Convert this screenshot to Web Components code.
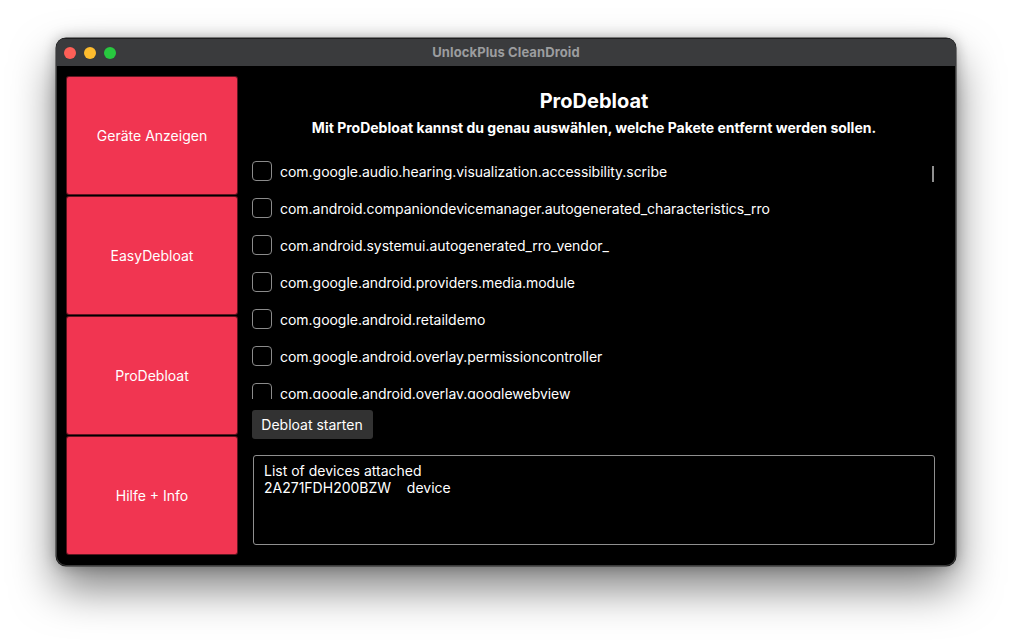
<!DOCTYPE html>
<html>
<head>
<meta charset="utf-8">
<title>UnlockPlus CleanDroid</title>
<style>
  html, body { margin: 0; background: #fff; }
  body { padding: 38px 56px 0; height: 602px; overflow: hidden; font-family: Inter, "Liberation Sans", sans-serif; }
</style>
</head>
<body>
<app-window>
  <nav-button>Geräte Anzeigen</nav-button>
  <nav-button>EasyDebloat</nav-button>
  <nav-button>ProDebloat</nav-button>
  <nav-button>Hilfe + Info</nav-button>
  <pro-debloat slot="main"></pro-debloat>
</app-window>

<script>
class AppWindow extends HTMLElement {
  constructor() {
    super();
    this.attachShadow({ mode: "open" });
    this.shadowRoot.innerHTML = `
    <style>
      :host {
        display: flex;
        flex-direction: column;
        width: 900px;
        height: 528px;
        box-sizing: border-box;
        background: #000;
        border-radius: 10px;
        overflow: hidden;
        box-shadow: inset 0 0 0 1px #3a3a3a, 0 0 0 .5px #222, 0 22px 44px rgba(0,0,0,.5), 0 0 14px rgba(0,0,0,.28);
      }
      .titlebar {
        flex: none;
        height: 28px;
        box-sizing: border-box;
        display: flex;
        align-items: center;
        position: relative;
        padding-left: 8px;
        gap: 8px;
        background: #3a3b3d;
        border-top: 1px solid #1d1d1f;
      }
      .dot { width: 12px; height: 12px; border-radius: 50%; }
      .title {
        position: absolute;
        inset: 0;
        text-align: center;
        font: 700 13px/27px Inter, "Liberation Sans", sans-serif;
        letter-spacing: .1px;
        color: #9c9d9f;
      }
      .body { flex: 1; display: flex; min-height: 0; }
      .side {
        flex: none;
        width: 170px;
        margin: 11px 1px 12px 11px;
        display: grid;
        grid-auto-rows: 117px;
        row-gap: 3px;
      }
      .main { flex: 1; min-width: 0; display: flex; }
    </style>
    <div class="titlebar">
      <span class="dot" style="background:#fe5f57"></span>
      <span class="dot" style="background:#febc2e"></span>
      <span class="dot" style="background:#28c83f"></span>
      <div class="title">UnlockPlus CleanDroid</div>
    </div>
    <div class="body">
      <div class="side"><slot></slot></div>
      <div class="main"><slot name="main"></slot></div>
    </div>`;
  }
}
customElements.define("app-window", AppWindow);

class NavButton extends HTMLElement {
  constructor() {
    super();
    this.attachShadow({ mode: "open" });
    this.shadowRoot.innerHTML = `
    <style>
      :host {
        display: flex;
        align-items: center;
        justify-content: center;
        background: #f13551;
        border-radius: 2px;
        box-shadow: 0 0 0 1px rgba(241,53,81,.4);
        color: #fff;
        font: 400 14px Inter, "Liberation Sans", sans-serif;
      }
    </style>
    <slot></slot>`;
  }
}
customElements.define("nav-button", NavButton);

class PackageRow extends HTMLElement {
  constructor() {
    super();
    this.attachShadow({ mode: "open" });
    this.shadowRoot.innerHTML = `
    <style>
      :host {
        display: flex;
        align-items: center;
        gap: 8px;
        height: 20px;
        color: #fff;
        font: 400 14px Inter, "Liberation Sans", sans-serif;
        letter-spacing: -.03px;
        white-space: nowrap;
      }
      .box {
        flex: none;
        width: 20px;
        height: 20px;
        box-sizing: border-box;
        border: 1px solid #8b8b8b;
        border-radius: 4px;
      }
    </style>
    <span class="box"></span><span class="name"><slot></slot></span>`;
  }
}
customElements.define("package-row", PackageRow);

const packages = [
  "com.google.audio.hearing.visualization.accessibility.scribe",
  "com.android.companiondevicemanager.autogenerated_characteristics_rro",
  "com.android.systemui.autogenerated_rro_vendor_",
  "com.google.android.providers.media.module",
  "com.google.android.retaildemo",
  "com.google.android.overlay.permissioncontroller",
  "com.google.android.overlay.googlewebview"
];

class ProDebloat extends HTMLElement {
  constructor() {
    super();
    this.attachShadow({ mode: "open" });
    this.shadowRoot.innerHTML = `
    <style>
      :host {
        flex: 1;
        min-width: 0;
        display: flex;
        flex-direction: column;
        padding: 0 21px 0 15px;
        color: #fff;
        font: 400 14px Inter, "Liberation Sans", sans-serif;
      }
      h1 {
        margin: 23px 0 0;
        font-size: 20px;
        line-height: 24px;
        font-weight: 700;
        text-align: center;
      }
      p {
        margin: 7px 0 0;
        font-size: 14px;
        line-height: 16px;
        font-weight: 700;
        text-align: center;
      }
      .list {
        position: relative;
        height: 238px;
        margin: 25px 0 0 -1px;
        overflow: hidden;
        display: flex;
        flex-direction: column;
        gap: 17px;
      }
      .thumb {
        position: absolute;
        top: 5px;
        right: 1px;
        width: 2px;
        height: 16px;
        background: #8f8f8f;
      }
      button {
        align-self: flex-start;
        margin-top: 11px;
        margin-left: -1px;
        width: 121px;
        height: 29px;
        padding: 0 1px 0 0;
        border: 0;
        border-radius: 3px;
        background: #323232;
        color: #fff;
        font: inherit;
      }
      .log {
        margin: 16px 0 0;
        height: 90px;
        box-sizing: border-box;
        padding: 6px 10px;
        border: 1px solid #8f8f8f;
        border-radius: 3px;
        font: inherit;
        line-height: 17px;
        white-space: pre;
      }
    </style>
    <h1>ProDebloat</h1>
    <p>Mit ProDebloat kannst du genau auswählen, welche Pakete entfernt werden sollen.</p>
    <div class="list">
      ${packages.map(p => `<package-row>${p}</package-row>`).join("")}
      <span class="thumb"></span>
    </div>
    <button>Debloat starten</button>
    <div class="log">List of devices attached
2A271FDH200BZW    device</div>`;
  }
}
customElements.define("pro-debloat", ProDebloat);
</script>
</body>
</html>
